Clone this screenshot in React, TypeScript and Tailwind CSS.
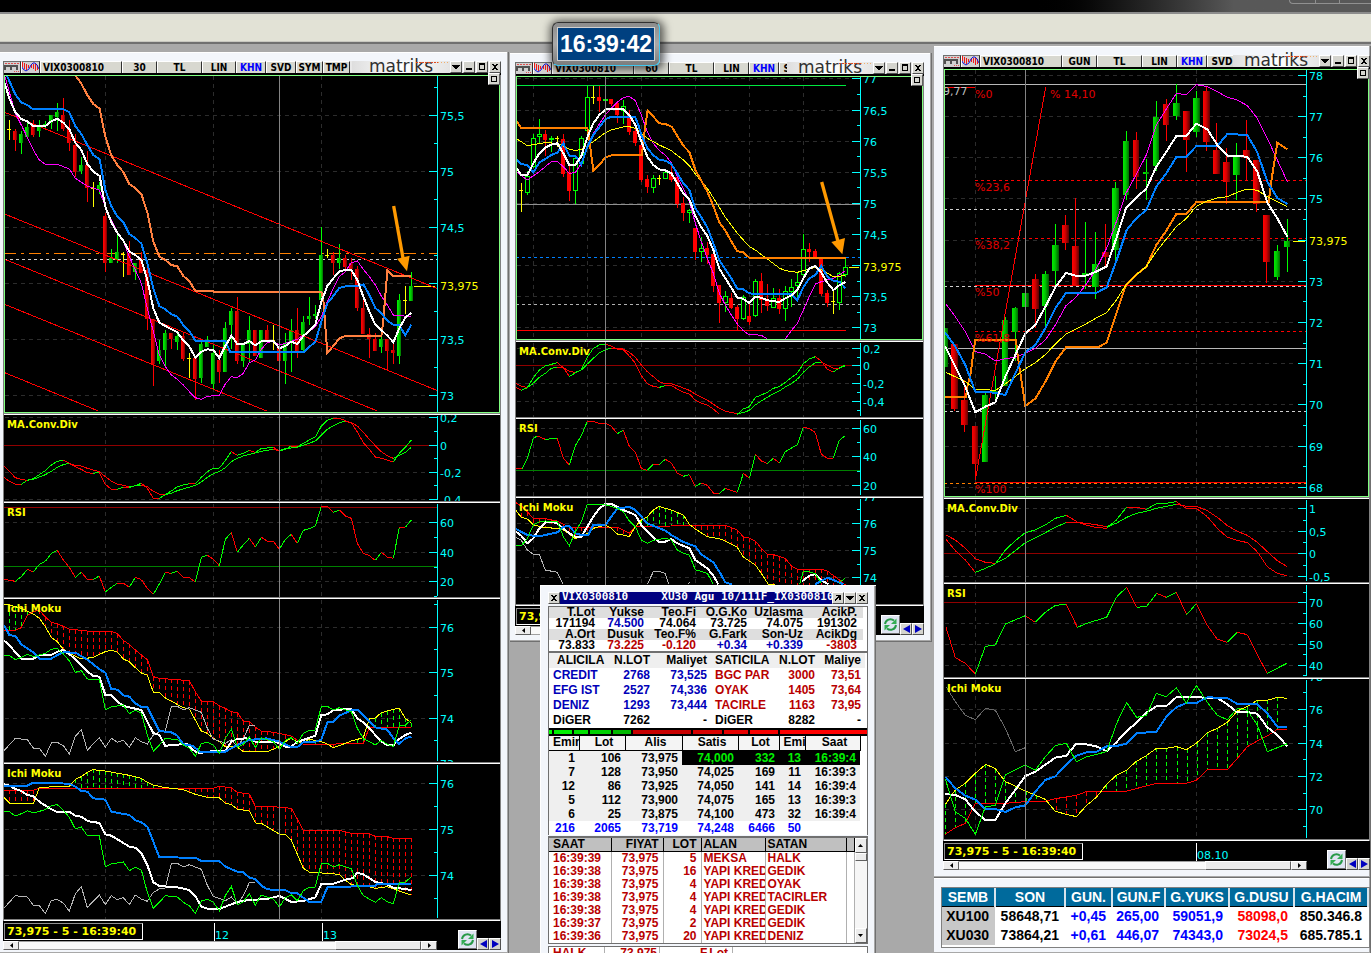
import { useState } from 'react'
import type { ReactNode } from 'react'

// Plot data is stored at three units per screen pixel
const UNIT = 3

type Point = [number, number]
type Series = { color: string; width?: number; points: string }
type Level = { y: number; color: string; dash?: string; from?: number; to?: number }
type Note = { x: number; y: number; text: string; color: string }

type Axis = {
  x: number
  major: [number, string][]
  minor: number[]
  columns: number[]
  cursor: number
}

const WHITE = '#ffffff'
const BLUE = '#0080ff'
const MAGENTA = '#ff00ff'
const YELLOW = '#ffff00'
const ORANGE = '#ff8000'
const SALMON = '#ff8040'
const RED = '#ff0000'
const LIME = '#00ff00'
const CYAN = '#00ffff'
const SILVER = '#b4b4b4'

const parse = (s: string): Point[] =>
  s.trim().split(/\s+/).map((p) => p.split(',').map(Number) as Point)

const rescale = (s: string, offset: number, factor: number) =>
  parse(s).map(([x, y]) => `${x},${Math.round(offset + y * factor)}`).join(' ')

function valueAt(points: Point[], x: number): number | null {
  for (let i = 1; i < points.length; i++) {
    const [x0, y0] = points[i - 1]
    const [x1, y1] = points[i]
    if (x >= x0 && x <= x1) return y0 + ((y1 - y0) * (x - x0)) / (x1 - x0 || 1)
  }
  return null
}

function Line({ color, width = 1, points }: Series) {
  return (
    <>
      {points.split('|').map((part, i) => (
        <polyline
          key={i}
          points={part.trim()}
          fill="none"
          stroke={color}
          strokeWidth={width}
          vectorEffect="non-scaling-stroke"
        />
      ))}
    </>
  )
}

// Rising stretches are green, falling ones are red
function SlopeLine({ points }: { points: string }) {
  return (
    <>
      {points.split('|').map((part, k) => {
        const pts = parse(part)
        return pts.slice(1).map(([x, y], i) => (
          <line
            key={`${k}-${i}`}
            x1={pts[i][0]}
            y1={pts[i][1]}
            x2={x}
            y2={y}
            stroke={y < pts[i][1] ? LIME : RED}
            vectorEffect="non-scaling-stroke"
          />
        ))
      })}
    </>
  )
}

function Cloud({ a, b, start, step }: { a: string; b: string; start: number; step: number }) {
  const pa = parse(a)
  const pb = parse(b)
  const bars = Array.from({ length: 70 }, (_, i) => Math.round(start + step * i))
  return (
    <>
      {bars.map((x) => {
        const ya = valueAt(pa, x)
        const yb = valueAt(pb, x)
        if (ya === null || yb === null || Math.abs(ya - yb) < 9) return null
        return (
          <line
            key={x}
            x1={x}
            x2={x}
            y1={Math.min(ya, yb)}
            y2={Math.max(ya, yb)}
            stroke={ya < yb ? LIME : RED}
            strokeDasharray="4 3"
            vectorEffect="non-scaling-stroke"
          />
        )
      })}
      <Line color={RED} points={b} />
      <Line color={YELLOW} points={a} />
    </>
  )
}

type CandleProps = { data: string; start: number; step: number; body: number; hollow?: boolean; id: string }

// Each entry: kind, high, top of body, bottom of body, low
function Candles({ data, start, step, body, hollow, id }: CandleProps) {
  return (
    <>
      <defs>
        <linearGradient id={`${id}-up`}>
          <stop offset="0" stopColor="#00ee00" />
          <stop offset="0.45" stopColor="#00c800" />
          <stop offset="1" stopColor="#006000" />
        </linearGradient>
        <linearGradient id={`${id}-down`}>
          <stop offset="0" stopColor="#ff0000" />
          <stop offset="0.45" stopColor="#d80000" />
          <stop offset="1" stopColor="#600000" />
        </linearGradient>
      </defs>
      {data.trim().split(/\s*;\s*/).map((row, i) => {
        const [kind, ...nums] = row.split(' ')
        const [high, top, bottom, low] = nums.map(Number)
        const x = Math.round(start + step * i)
        const color = kind === 'g' ? LIME : kind === 'r' ? RED : YELLOW
        const h = Math.max(bottom - top, 3)
        let fill = kind === 'y' ? YELLOW : `url(#${id}-${kind === 'g' ? 'up' : 'down'})`
        if (hollow) fill = kind === 'g' ? '#000000' : color
        return (
          <g key={i}>
            <line x1={x} x2={x} y1={high} y2={low} stroke={color} vectorEffect="non-scaling-stroke" />
            <rect
              x={x - body / 2}
              y={top}
              width={body}
              height={h}
              fill={fill}
              stroke={hollow && kind === 'g' ? LIME : 'none'}
              vectorEffect="non-scaling-stroke"
            />
          </g>
        )
      })}
    </>
  )
}

type PaneProps = {
  ox: number
  oy: number
  axis: Axis
  heightClass: string
  height: number
  title?: string
  levels?: Level[]
  notes?: Note[]
  framed?: boolean
  children: ReactNode
}

function Pane({ ox, oy, axis, heightClass, height, title, levels = [], notes = [], framed, children }: PaneProps) {
  const bottom = oy + height * UNIT
  return (
    <section className="relative border-x border-x-[#808080] bg-black">
      <svg className={`block w-full ${heightClass} font-['DejaVu_Sans',Verdana,sans-serif] text-[11px]`}>
        <g transform={`scale(${1 / UNIT}) translate(${-ox} ${-oy})`} shapeRendering="crispEdges">
          {axis.major.map(([y]) => (
            <line key={y} x1={ox + 4} x2={axis.x - 30} y1={y} y2={y} stroke="#2c2c2c" strokeDasharray="4 4" vectorEffect="non-scaling-stroke" />
          ))}
          {axis.columns.map((x) => (
            <line key={x} x1={x} x2={x} y1={oy + 4} y2={bottom} stroke="#2c2c2c" strokeDasharray="4 4" vectorEffect="non-scaling-stroke" />
          ))}
          {levels.map((l, i) => (
            <line
              key={i}
              x1={l.from ?? ox}
              x2={l.to ?? axis.x}
              y1={l.y}
              y2={l.y}
              stroke={l.color}
              strokeDasharray={l.dash}
              vectorEffect="non-scaling-stroke"
            />
          ))}
          {children}
          <line x1={axis.cursor} x2={axis.cursor} y1={oy} y2={bottom} stroke="#848484" vectorEffect="non-scaling-stroke" />
          <line x1={axis.x} x2={axis.x} y1={oy + 3} y2={bottom - 3} stroke={CYAN} vectorEffect="non-scaling-stroke" />
          {axis.major.map(([y]) => (
            <line key={y} x1={axis.x - 26} x2={axis.x} y1={y} y2={y} stroke={CYAN} vectorEffect="non-scaling-stroke" />
          ))}
          {axis.minor.map((y) => (
            <line key={y} x1={axis.x - 10} x2={axis.x} y1={y} y2={y} stroke={CYAN} vectorEffect="non-scaling-stroke" />
          ))}
        </g>
        {axis.major.filter(([, text]) => text).map(([y, text]) => (
          <text key={y} x={Math.floor((axis.x - ox + 8) / UNIT)} y={Math.round((y - oy + 13) / UNIT)} fill={CYAN}>
            {text}
          </text>
        ))}
        {notes.map((n) => (
          <text key={n.text} x={Math.floor((n.x - ox) / UNIT)} y={Math.round((n.y - oy) / UNIT)} fill={n.color}>
            {n.text}
          </text>
        ))}
        {title && (
          <text x="3" y="13" fill={YELLOW} className="text-[10px] font-bold">
            {title}
          </text>
        )}
        {framed && (
          <rect x="0" y="0" width="100%" height={height} fill="none" stroke="#80ff80" strokeWidth="2" shapeRendering="crispEdges" />
        )}
      </svg>
      {framed && (
        <button
          aria-label="Restore pane"
          className="absolute right-0 -top-0.5 flex size-3 items-center justify-center border border-t-white border-l-white border-r-[#606060] border-b-[#606060] bg-[#d6d6d0]"
        >
          <span className="size-1.5 border border-black" />
        </button>
      )}
      <div className="h-px bg-[#808080]" />
      <div className="h-px bg-white" />
    </section>
  )
}

function Arrow({ from, to, head }: { from: Point; to: Point; head: string }) {
  return (
    <g shapeRendering="auto">
      <line x1={from[0]} y1={from[1]} x2={to[0]} y2={to[1]} stroke="#ff9900" strokeWidth={10} />
      <polygon points={head} fill="#ff9900" />
    </g>
  )
}

/* ---------- window chrome ---------- */

function SmallButton({ label, children }: { label: string; children: ReactNode }) {
  return (
    <button
      aria-label={label}
      className="flex h-3 w-3 shrink-0 items-center justify-center border border-t-white border-l-white border-r-[#505050] border-b-[#505050] bg-[#d4d4ce]"
    >
      <svg width="8" height="8" viewBox="0 0 8 8" shapeRendering="crispEdges">{children}</svg>
    </button>
  )
}

const Cross = () => <path d="M1 1h2v1h2v-1h2v1h-1v1h-1v2h1v1h1v1h-2v-1h-2v1h-2v-1h1v-1h1v-2h-1v-1h-1z" fill="#000" />
const Down = () => <path d="M0 2h8v1h-1v1h-1v1h-1v1h-2v-1h-1v-1h-1v-1h-1z" fill="#000" />

function WindowButtons() {
  return (
    <div className="flex shrink-0 gap-px">
      <SmallButton label="Menu"><Down /></SmallButton>
      <SmallButton label="Minimize"><path d="M1 5h6v2h-6z" fill="#000" /></SmallButton>
      <SmallButton label="Maximize"><path d="M1 0h6v7h-6z M2 2v4h4v-4z" fill="#000" fillRule="evenodd" /></SmallButton>
      <SmallButton label="Close"><Cross /></SmallButton>
    </div>
  )
}

function Logo({ widthClass }: { widthClass: string }) {
  return (
    <div className={`relative flex h-3 shrink-0 justify-center bg-gradient-to-r from-[#dedede] via-white to-[#e4e4e4] ${widthClass}`}>
      <span className="font-['DejaVu_Sans',Verdana,sans-serif] text-[17px] leading-[10px] font-normal text-[#303030]">matriks</span>
      <svg className="absolute right-0 top-0" width="34" height="2" shapeRendering="crispEdges">
        <line x1="0" x2="22" y1="1" y2="1" stroke="#e04820" strokeDasharray="2 1" />
        <line x1="22" x2="34" y1="1" y2="1" stroke="#f0b070" strokeDasharray="1 2" />
      </svg>
    </div>
  )
}

const toolClass =
  'h-3 shrink-0 overflow-hidden border-t border-r border-l border-t-white border-l-white border-r-[#303030] bg-[#d8d8d0] text-center text-[10px] leading-[11px] font-bold whitespace-nowrap'

type Tool = [string, string]

function Toolbar({ symbol, tools, logoClass }: { symbol: string; tools: Tool[]; logoClass: string }) {
  return (
    <header className="border-l border-l-[#707070] bg-black pb-0.5">
      <div className="flex h-3 justify-between bg-[#e8e8e8] font-['DejaVu_Sans_Condensed','Noto_Sans',Tahoma,sans-serif]">
        <div className="flex min-w-0 flex-1 overflow-hidden">
          <button aria-label="Page" className="h-3 w-[17px] shrink-0 border-t border-r border-t-[#707070] border-r-[#303030] bg-[#d0d0d0]">
            <svg width="16" height="11" viewBox="0 0 16 11" shapeRendering="crispEdges">
              <path d="M1 1.5h14" stroke="#e05050" strokeDasharray="2 1" />
              <path d="M1 8V4h12v4M7 4v4" fill="none" stroke="#505050" strokeWidth="2" />
              <path d="M10 9.500h5" stroke="#e05050" strokeDasharray="1 1" />
            </svg>
          </button>
          <button aria-label="Chart type" className="h-3 w-[19px] shrink-0 border-t border-r border-l border-t-[#707070] border-l-white border-r-[#303030] bg-[#d0d0d0]">
            <svg width="17" height="11" viewBox="0 0 17 11" shapeRendering="crispEdges">
              <path d="M0.500 0v5M2.500 1v6M4.500 2v6M6.500 3v3M9.500 3v3M11.500 2v5M13.500 2v7M15.500 3v5" stroke="#f01818" />
              <path d="M0 5l1 2 3 2 3-2 2-4 2-2h2l2 2 2 4" fill="none" stroke="#1818d8" shapeRendering="auto" />
            </svg>
          </button>
          <button className={`w-[82px] pl-0.5 !text-left ${toolClass}`}>{symbol}</button>
          {tools.map(([text, width]) => (
            <button key={text} className={`${toolClass} ${width} ${text === 'KHN' ? 'text-[#0000ff]' : 'text-black'}`}>
              {text}
            </button>
          ))}
        </div>
        <Logo widthClass={logoClass} />
        <WindowButtons />
      </div>
    </header>
  )
}

type FooterProps = { axisClass: string; ticks: [number, string][]; thumbClass: string }

function ChartFooter({ axisClass, ticks, thumbClass }: FooterProps) {
  return (
    <footer className="flex justify-between bg-black">
      <div className={`min-w-0 ${axisClass}`}>
        <div className="flex h-5">
          <output className="mt-0.5 mb-px ml-px w-[139px] shrink-0 overflow-hidden border border-t-[#909090] border-l-[#909090] border-r-white border-b-white pl-0.5 font-['DejaVu_Sans',Verdana,sans-serif] text-[11px] leading-[15px] font-bold whitespace-nowrap text-[#ffff00]">
            73,975 - 5 - 16:39:40
          </output>
          <svg className="h-5 min-w-0 flex-1 font-['DejaVu_Sans',Verdana,sans-serif] text-[11px]">
            {ticks.map(([x, text]) => (
              <g key={text}>
                <line x1={x} x2={x} y1="2" y2="20" stroke="#fff" shapeRendering="crispEdges" />
                <text x={x + 1} y="18" fill={CYAN}>{text}</text>
              </g>
            ))}
          </svg>
        </div>
        <div className="flex h-[9px] bg-[#fafafa]">
          <button aria-label="Scroll left" className="flex w-4 items-center justify-center border border-white border-r-[#606060] border-b-[#606060] bg-[#ececec]">
            <svg width="3" height="5"><path d="M3 0v5L0 2.500z" /></svg>
          </button>
          <div className="flex-1 border-y border-[#a0a0a0]" />
          <div className={`border border-white border-r-[#606060] border-b-[#606060] bg-[#ececec] ${thumbClass}`} />
          <button aria-label="Scroll right" className="flex w-4 items-center justify-center border border-white border-r-[#606060] border-b-[#606060] bg-[#ececec]">
            <svg width="3" height="5"><path d="M0 0v5l3-2.500z" /></svg>
          </button>
        </div>
      </div>
      <div className="flex items-end">
        <button aria-label="Refresh" className="mb-px flex size-[19px] items-center justify-center border border-t-white border-l-white border-r-[#707070] border-b-[#707070] bg-[#dfe4f2]">
          <svg width="15" height="15" viewBox="0 0 15 15">
            <path d="M2 7a5.500 5.500 0 0 1 9-3.500" fill="none" stroke="#279a48" strokeWidth="2" />
            <path d="M13.500 1.500v5.500h-5.500z" fill="#35ad55" />
            <path d="M13 8a5.500 5.500 0 0 1-9 3.500" fill="none" stroke="#279a48" strokeWidth="2" />
            <path d="M1.500 13.500v-5.500h5.500z" fill="#35ad55" />
          </svg>
        </button>
        <button aria-label="Previous" className="flex size-3 items-center justify-center border border-t-white border-l-white border-r-[#505050] border-b-[#505050] bg-[#d4d4ce]">
          <svg width="7" height="8"><path d="M7 0v8L0 4z" fill="#0000c0" /></svg>
        </button>
        <button aria-label="Next" className="flex size-3 items-center justify-center border border-t-white border-l-white border-r-[#505050] border-b-[#505050] bg-[#d4d4ce]">
          <svg width="7" height="8"><path d="M0 0v8l7-4z" fill="#0000c0" /></svg>
        </button>
      </div>
    </footer>
  )
}

const frameClass = 'bg-[#f3f6fb] shadow-[inset_-1px_-1px_0_#707070,inset_-2px_-2px_0_#a8a8a8,inset_0_1px_0_#ffffff]'

/* ---------- 30 minute chart ---------- */

const leftCandles = `y 210 238 240 270;r 237 243 271 302;g 243 252 279 311;g 215 230 261 261;r 210 227 255 262;g 210 225 243 262;g 212 222 228 235;g 195 195 218 236;g 159 186 200 243;r 144 195 238 243;r 211 237 280 302;r 252 285 365 380;g 321 345 363 372;r 303 345 415 456;y 396 414 416 471;g 396 405 420 432;r 490 498 640 666;g 598 624 640 640;g 545 606 626 640;y 606 611 613 682;r 573 608 674 674;g 640 640 666 690;r 606 624 668 668;r 640 660 808 840;r 808 808 942 1008;g 870 900 934 942;g 840 850 900 951;r 848 850 868 898;g 850 858 877 900;r 850 858 926 932;y 909 924 926 984;r 924 924 988 1050;g 876 883 985 1000;g 857 877 890 890;g 885 908 1001 1018;r 900 930 967 1000;g 816 834 965 965;g 775 784 825 896;r 741 784 934 942;g 880 880 934 952;g 798 841 882 940;r 841 841 918 918;g 841 841 923 923;r 825 841 874 878;y 825 870 872 900;r 870 890 934 934;g 850 878 934 1001;g 808 841 880 966;r 773 841 902 924;g 798 816 901 910;g 741 798 806 826;g 765 793 797 806;g 531 615 750 750;y 597 616 618 624;r 606 615 640 676;g 582 624 640 658;r 615 624 650 658;r 624 640 658 690;r 648 658 775 783;r 740 775 851 851;r 834 851 868 924;r 850 868 902 902;g 860 868 892 909;r 868 868 902 962;r 882 900 910 942;g 732 750 918 942;y 708 750 752 792;g 666 708 753 753`

const leftPrice: Series[] = [
  { color: RED, points: '14,187 1310,715|14,492 1310,1021|14,628 1132,1083|14,763 800,1083|14,968 293,1082' },
  { color: MAGENTA, points: '15,80 46,190 64,225 82,262 100,300 118,330 136,343 172,343 208,357 226,385 262,408 298,420 316,470 334,510 352,545 370,575 388,620 406,660 424,700 442,775 460,845 478,915 496,950 514,975 532,988 550,1005 568,1025 586,1043 604,1048 622,1039 658,1036 676,1002 694,980 712,983 730,970 748,938 766,930 784,898 802,877 820,875 838,885 856,880 892,868 910,855 928,845 946,830 964,800 982,755 1000,715 1018,680 1036,665 1054,638 1072,633 1090,658 1108,680 1126,705 1144,738 1162,765 1180,795 1234,800' },
  { color: SALMON, width: 2, points: '225,75 243,99 262,135 280,162 299,176 316,260 334,316 352,345 370,366 388,402 406,414 424,432 442,487 460,575 478,620 496,630 514,645 532,649 550,678 568,694 586,722 638,722 640,725 964,725 970,750 982,908 1000,888 1018,865 1036,858 1144,858 1150,810 1162,662 1180,678 1234,678' },
  { color: BLUE, width: 2, points: '20,75 46,133 64,157 82,165 98,177 190,177 208,187 226,228 244,252 262,285 280,315 299,328 316,420 334,468 352,500 370,516 388,552 406,564 424,581 442,640 460,715 478,768 496,778 514,793 532,800 550,825 568,843 586,872 676,872 690,905 912,905 946,875 964,815 982,760 1000,738 1018,714 1042,708 1072,708 1090,703 1108,735 1126,774 1144,790 1162,812 1180,824 1198,826 1216,856 1234,824' },
  { color: WHITE, width: 2, points: '14,100 28,145 46,187 64,207 82,214 98,227 136,228 154,214 172,206 190,218 208,238 226,278 244,300 262,342 280,365 299,378 316,470 334,517 352,548 370,572 388,605 406,615 424,630 442,690 460,775 478,818 496,828 532,847 550,872 568,890 586,922 604,905 622,898 640,900 658,924 676,888 694,857 712,882 730,882 748,873 766,886 784,874 820,872 838,895 856,888 874,875 892,882 910,858 928,842 946,824 964,755 982,708 1000,685 1018,664 1036,660 1054,660 1072,690 1090,740 1108,785 1126,824 1144,840 1162,857 1180,876 1198,835 1216,803 1234,788' },
]

const leftMacd = '12,202 28,214 46,223 64,223 82,211 100,206 118,194 136,182 154,165 172,154 190,151 208,160 226,170 244,178 262,188 280,190 298,187 316,223 334,238 352,238 370,232 388,232 406,227 424,220 442,235 460,265 478,266 496,253 514,243 532,230 550,225 568,221 586,222 604,202 622,185 640,175 658,174 676,152 694,125 712,136 730,130 748,121 766,128 784,115 802,114 820,112 838,123 856,118 874,108 892,111 910,100 928,90 946,81 964,48 982,31 1000,25 1018,25 1036,32 1054,38 1072,66 1090,98 1108,118 1126,141 1144,145 1162,150 1180,156 1198,130 1216,112 1234,90'
const leftSignal = '12,168 46,203 64,208 82,211 100,208 136,194 154,184 172,172 190,164 208,160 226,166 244,168 262,175 298,185 316,200 334,213 352,222 388,230 424,225 442,230 460,244 478,253 496,254 514,250 532,242 586,226 604,216 622,202 640,191 658,185 676,173 694,155 712,145 730,138 784,124 820,118 838,122 856,116 892,112 946,93 964,75 982,58 1000,47 1018,38 1036,34 1054,38 1072,48 1090,67 1108,88 1126,107 1144,125 1162,137 1180,145 1198,136 1216,127 1234,112'
const leftRsi = '12,508 46,514 64,500 82,478 100,486 118,463 136,454 154,430 172,421 190,450 208,472 226,502 244,487 262,508 280,508 298,498 316,546 334,532 352,520 370,520 388,532 406,502 424,509 442,535 460,553 478,522 496,487 514,490 532,484 550,502 568,503 586,516 604,442 622,436 640,448 658,467 676,388 694,367 712,427 730,404 748,385 766,411 784,382 802,394 820,394 838,418 856,388 874,373 892,400 910,361 928,356 946,348 964,289 982,289 1000,307 1018,300 1036,318 1054,325 1072,400 1090,430 1108,437 1126,451 1144,427 1162,441 1180,445 1198,352 1216,352 1234,330'

const leftClose = '12,181 28,181 46,194 64,187 82,178 100,185 136,175 154,163 172,160 190,177 208,198 226,232 244,227 262,252 298,253 316,345 334,336 370,330 388,356 406,345 424,354 442,420 460,468 478,450 496,430 532,434 550,450 568,460 586,484 604,446 622,441 640,450 658,475 676,430 694,403 712,457 730,448 748,425 766,458 784,428 820,440 838,464 856,436 874,428 892,445 910,415 928,406 946,405 964,334 982,334 1000,345 1018,338 1054,350 1072,400 1090,430 1108,440 1126,450 1144,436 1162,448 1180,454 1198,392 1216,390 1234,374'
const leftLagging = '12,467 46,430 82,434 100,459 118,460 136,484 154,444 172,442 190,452 208,477 226,424 244,404 262,466 280,446 298,428 316,457 334,430 352,442 370,436 388,457 406,428 424,440 442,447 460,420 478,410 496,408 514,336 532,334 550,345 568,338 586,345 604,352 622,400 640,432 676,445 694,434 712,455 730,430 748,392 766,391'

const leftShort = {
  a: '12,28 28,30 64,40 100,57 118,70 136,95 154,127 172,140 190,163 208,175 244,192 280,187 316,170 334,166 352,171 370,192 388,200 406,218 424,234 442,240 460,292 478,293 496,309 550,338 568,342 586,375 604,408 622,415 640,430 658,440 676,455 712,456 730,470 800,471 838,455 856,440 874,430 892,440 910,443 928,433 964,440 982,447 1000,458 1018,452 1054,438 1090,428 1108,371 1126,369 1144,353 1180,343 1198,340 1216,370 1234,384',
  b: '12,106 46,106 64,98 82,62 100,50 118,46 136,66 154,82 172,86 208,102 262,108 334,109 352,116 370,136 388,148 406,165 424,180 442,194 460,245 478,250 532,254 568,257 586,290 604,318 640,320 658,332 676,340 694,350 712,353 730,378 748,380 766,397 784,408 802,409 838,415 874,423 910,448 964,448 1054,446 1090,445 1108,397 1234,397',
  fast: '12,137 28,150 46,172 64,191 100,191 118,181 154,180 172,170 190,165 208,178 226,192 244,210 262,230 280,243 298,245 316,300 334,301 352,320 370,333 424,345 442,380 460,414 478,420 496,453 514,450 560,447 586,470 600,474 640,468 676,468 694,440 712,432 740,430 766,440 800,440 838,443 856,455 874,455 892,440 910,435 946,422 964,360 982,358 1000,345 1054,342 1072,370 1090,382 1108,400 1126,420 1144,440 1162,450 1180,451 1198,432 1216,420 1234,413',
  slow: '12,90 28,120 46,123 64,148 100,172 118,191 154,191 172,180 190,172 226,173 262,194 298,222 316,233 334,282 352,284 370,301 388,305 406,325 424,336 442,337 478,408 514,412 532,422 550,448 577,452 600,470 676,470 712,450 748,435 800,430 838,440 874,456 892,456 910,442 946,440 964,434 982,382 1000,380 1018,362 1054,346 1072,344 1090,360 1108,380 1126,397 1162,404 1180,430 1198,447 1216,430 1234,425',
}

const leftLong = {
  a: '12,607 28,624 46,626 100,626 118,577 208,574 226,553 244,545 262,532 280,523 298,527 316,528 388,541 424,550 442,562 460,570 490,577 550,584 586,598 622,607 658,609 676,624 694,629 712,642 748,648 766,684 784,685 838,717 856,718 874,735 892,778 910,820 928,831 1018,838 1036,855 1054,869 1108,875 1126,880 1162,875 1198,888 1216,894 1234,900',
  b: '12,586 100,586 118,580 640,580 658,574 694,578 712,592 748,597 766,634 820,635 874,640 892,672 910,706 1018,706 1054,715 1108,716 1126,724 1162,725 1180,730 1234,730',
  fast: '12,568 28,572 46,582 64,588 82,600 100,604 118,620 154,643 172,651 208,650 226,662 244,665 262,677 280,682 298,683 316,718 334,722 388,755 406,758 424,775 442,810 460,862 478,873 532,877 568,885 586,903 604,935 622,941 658,942 712,921 748,915 802,912 838,903 874,921 910,918 946,907 964,867 1000,866 1036,854 1060,849 1072,833 1090,838 1126,861 1162,868 1180,878 1216,882 1234,886',
  slow: '12,574 82,572 100,563 208,566 226,575 244,588 262,590 280,610 316,614 334,650 388,660 406,676 424,682 442,695 460,740 478,787 586,788 604,798 658,798 676,815 712,830 730,832 748,848 766,852 784,872 802,883 856,886 874,894 892,895 928,921 964,920 982,877 1126,872 1130,867 1234,867',
}

function LeftChart() {
  const base = { x: 1312, columns: [317, 641, 965], cursor: 838 }
  return (
    <article className={`w-[509px] shrink-0 pt-[9px] pr-2 pb-1 pl-[3px] ${frameClass}`}>
      <Toolbar
        symbol="VIX0300810"
        logoClass="w-[98px]"
        tools={[['30', 'w-[35px]'], ['TL', 'w-[45px]'], ['LIN', 'w-[34px]'], ['KHN', 'w-[30px]'], ['SVD', 'w-[30px]'], ['SYM', 'w-[27px]'], ['TMP', 'w-[27px]']]}
      />
      <Pane
        framed
        ox={12}
        oy={75}
        heightClass="h-[338px]"
        height={338}
        axis={{ ...base, major: [[197, '75,5'], [365, '75'], [533, '74,5'], [701, ''], [869, '73,5'], [1037, '73']], minor: [113, 281, 449, 617, 785, 953] }}
        levels={[
          { y: 610, color: ORANGE, dash: '12 5 3 5' },
          { y: 628, color: '#d0d0d0', dash: '3 3' },
          { y: 709, color: YELLOW, from: 1243, to: 1306 },
        ]}
        notes={[{ x: 1321, y: 720, text: '73,975', color: YELLOW }]}
      >
        <Candles id="m30" data={leftCandles} start={28} step={18} body={12} />
        {leftPrice.map((s, i) => <Line key={i} {...s} />)}
        <Arrow from={[1181, 468]} to={[1209, 624]} head="1191,626 1229,617 1221,664" />
      </Pane>
      <Pane
        ox={12}
        oy={15}
        heightClass="h-[86px]"
        height={86}
        title="MA.Conv.Div"
        axis={{ ...base, major: [[22, '0,2'], [106, '0'], [188, '-0,2'], [268, '-0,4']], minor: [64, 146, 227] }}
        levels={[{ y: 106, color: '#900000' }]}
      >
        <SlopeLine points={leftMacd} />
        <SlopeLine points={leftSignal} />
      </Pane>
      <Pane
        ox={12}
        oy={279}
        heightClass="h-[94px]"
        height={94}
        title="RSI"
        axis={{ ...base, major: [[338, '60'], [428, '40'], [515, '20']], minor: [382, 471, 558] }}
        levels={[{ y: 292, color: '#900000' }, { y: 469, color: '#008000' }]}
      >
        <SlopeLine points={leftRsi} />
      </Pane>
      <Pane
        ox={12}
        oy={12}
        heightClass="h-[163px]"
        height={163}
        title="Ichi Moku"
        axis={{ ...base, major: [[98, '76'], [233, '75'], [371, '74'], [507, '73']], minor: [29, 164, 301, 437] }}
      >
        <Cloud a={leftShort.a} b={leftShort.b} start={28} step={18} />
        <Line color={SILVER} points={leftLagging} />
        <Line color={WHITE} width={2} points={leftShort.fast} />
        <Line color={BLUE} width={2} points={leftShort.slow} />
        <Line color={LIME} points={leftClose} />
      </Pane>
      <Pane
        ox={12}
        oy={507}
        heightClass="h-[155px]"
        height={155}
        title="Ichi Moku"
        axis={{ ...base, major: [[566, '76'], [704, '75'], [842, '74']], minor: [635, 773, 911] }}
      >
        <Cloud a={leftLong.a} b={leftLong.b} start={28} step={18} />
        <Line color={SILVER} points={rescale(leftLagging, 467, 1.011)} />
        <Line color={WHITE} width={2} points={leftLong.fast} />
        <Line color={BLUE} width={2} points={leftLong.slow} />
        <Line color={LIME} points={rescale(leftClose, 467, 1.011)} />
      </Pane>
      <ChartFooter axisClass="w-[434px]" ticks={[[71, '12'], [179, '13']]} thumbClass="w-[86px]" />
    </article>
  )
}

/* ---------- 60 minute chart ---------- */

const midCandles = `r 528 528 573 573;y 550 571 573 636;g 513 529 578 584;g 402 415 500 505;g 357 402 409 430;r 390 402 420 467;g 408 414 419 456;y 408 414 418 440;r 402 418 522 530;r 497 517 573 603;g 470 475 571 612;g 408 415 490 497;g 257 291 392 400;y 257 290 293 312;r 257 291 302 336;g 285 298 302 317;r 298 298 312 318;r 305 310 345 370;g 299 320 331 372;r 330 345 396 405;r 370 393 430 437;r 430 435 540 545;r 525 538 561 579;g 525 535 562 579;y 525 533 536 554;g 510 517 536 536;r 495 517 539 545;r 530 530 611 623;r 590 610 638 662;g 628 632 637 668;r 684 684 756 780;g 711 745 753 786;r 727 745 764 792;r 745 762 857 876;r 856 856 909 968;g 872 889 908 936;r 880 893 923 928;r 915 920 957 990;g 885 893 956 960;r 910 947 965 976;g 838 844 947 950;r 818 843 900 940;r 852 900 917 934;g 864 894 922 922;r 868 893 927 942;g 857 875 926 962;g 838 862 875 922;g 820 846 857 900;g 702 747 823 830;r 729 748 756 785;r 748 754 776 776;r 770 772 882 888;r 870 880 909 922;y 870 904 907 942;g 815 821 908 930;g 772 801 824 830`

const midPrice: Series[] = [
  { color: MAGENTA, points: '33,515 67,540 103,515 139,485 157,485 175,500 193,520 211,518 229,490 247,440 265,400 301,345 319,325 337,306 355,293 373,289 391,302 409,345 427,395 445,430 463,452 481,465 499,488 517,530 535,565 553,605 571,670 589,725 607,775 625,820 643,880 661,915 679,945 697,972 715,992 733,1005 751,1004 769,1006 787,1016|841,1016 859,992 877,970 895,930 913,890 931,852 949,845 985,835 1003,825 1021,812' },
  { color: YELLOW, points: '33,415 67,437 85,434 121,428 157,430 193,448 211,451 229,449 265,425 301,398 319,390 355,381 373,380 391,385 427,415 463,435 499,452 535,480 553,497 571,522 607,565 643,622 661,652 697,700 733,740 751,750 787,777 823,804 841,812 877,817 895,812 931,802 949,808 985,830 1021,827' },
  { color: ORANGE, width: 2, points: '33,362 49,384 247,384 253,420 265,511 283,495 301,472 322,465 411,465 415,420 428,331 445,350 463,370 481,372 500,380 517,408 535,437 553,456 571,510 607,575 625,618 643,667 661,692 679,724 697,754 713,756 733,773 1022,774' },
  { color: BLUE, width: 2, points: '33,478 49,492 67,495 85,517 103,488 139,465 157,458 175,430 193,467 211,468 229,494 247,440 265,404 283,382 301,358 319,350 390,350 400,375 409,405 427,444 445,466 463,479 481,482 499,492 517,520 535,550 553,570 571,625 589,652 607,682 625,730 643,780 661,808 679,835 697,866 715,868 733,880 751,882 859,882 877,900 895,862 913,835 931,825 949,798 967,830 985,842 1003,845 1021,864' },
  { color: WHITE, width: 2, points: '33,502 49,525 67,525 85,490 103,460 121,443 139,434 157,430 175,460 193,495 211,495 229,468 247,412 265,370 283,345 301,329 319,326 355,328 373,345 391,375 409,425 427,470 445,495 463,508 481,511 499,520 517,550 535,580 553,598 571,648 589,682 607,708 625,750 643,806 661,835 679,863 697,893 713,896 733,909 751,890 769,893 787,901 823,906 841,895 859,886 877,870 895,835 913,805 931,798 949,818 967,848 985,870 1003,856 1021,846' },
]

const midMacd = '33,157 49,166 67,158 85,128 103,105 121,93 139,88 157,83 175,98 193,124 211,114 229,105 247,66 265,40 283,30 301,27 319,33 337,42 355,45 373,62 391,85 409,122 427,146 445,154 463,157 481,152 499,152 517,162 535,172 553,176 571,196 589,205 607,210 625,222 643,238|697,238 715,222 733,215 751,187 769,180 787,172 805,160 823,155 841,142 859,128 877,115 895,86 913,72 931,65 949,78 967,103 985,111 1003,98 1021,90'
const midSignal = '33,146 49,153 67,158 85,145 103,127 121,115 139,100 157,97 175,98 193,109 211,112 229,105 247,88 265,70 283,53 301,44 319,40 355,42 373,52 391,67 409,90 427,110 445,125 463,140 481,146 499,146 517,152 553,166 571,178 607,196 643,220 661,229 697,236 715,233 733,226 751,210 769,198 787,187 805,176 823,168 841,156 859,146 877,133 895,112 913,96 931,83 949,82 967,90 985,100 1003,100 1021,92'
const midRsi = '33,401 51,401 67,370 85,310 97,303 121,313 157,310 175,370 193,390 211,332 229,302 247,259 265,259 283,265 301,265 319,274 337,296 355,286 373,334 391,352 409,400 427,406 445,388 463,388 481,373 499,384 517,415 535,424 553,419 571,454 589,444 607,451 625,474 643,476 661,460 697,472 715,415 733,430 751,358 769,378 787,386 805,370 823,384 841,350 877,329 895,277 913,280 931,293 949,358 967,370 985,370 1003,316 1021,302'
const midSpanA = '33,527 49,547 67,552 85,570 121,578 157,580 175,585 193,597 211,611 229,605 247,595 265,580 301,570 319,580 337,597 355,600 373,605 391,575 409,555 427,545 445,525 463,514 481,520 499,525 535,540 553,568 571,582 607,605 643,611 661,618 697,637 715,666 751,690 769,715 790,748 1003,770'
const midSpanB = '33,503 51,515 67,530 85,551 121,551 157,558 193,577 337,577 355,585 373,595 391,574 499,573 661,571 679,578 697,585 715,606 733,609 751,618 769,640 787,658 805,659 841,670 859,693 877,703 949,703 967,708 1003,735 1021,750'

function MiddleChart() {
  const base = { x: 1067, columns: [85, 247, 409, 571, 733, 895], cursor: 301 }
  return (
    <article className={`mt-px w-[422px] shrink-0 pt-[9px] pr-2 pb-[7px] pl-[5px] ${frameClass}`}>
      <Toolbar
        symbol="VIX0300810"
        logoClass="w-[86px]"
        tools={[['60', 'w-[35px]'], ['TL', 'w-[45px]'], ['LIN', 'w-[35px]'], ['KHN', 'w-[30px]'], ['SVD', 'w-[30px]']]}
      />
      <Pane
        framed
        ox={33}
        oy={228}
        heightClass="h-[264px]"
        height={264}
        axis={{
          ...base,
          major: [[236, '77'], [331, '76,5'], [424, '76'], [517, '75,5'], [611, '75'], [704, '74,5'], [797, ''], [890, '73,5'], [983, '73']],
          minor: [283, 376, 469, 562, 655, 748, 843, 937],
        }}
        levels={[
          { y: 256, color: '#00e840', to: 1022 },
          { y: 613, color: '#909090' },
          { y: 772, color: BLUE, dash: '3 3' },
          { y: 913, color: '#b0b0b0', dash: '3 3' },
          { y: 991, color: RED, to: 1022 },
          { y: 802, color: YELLOW, from: 1031, to: 1062 },
        ]}
        notes={[{ x: 1075, y: 814, text: '73,975', color: YELLOW }]}
      >
        <Candles id="m60" hollow data={midCandles} start={31} step={18} body={12} />
        {midPrice.map((s, i) => <Line key={i} {...s} />)}
        <Arrow from={[950, 546]} to={[1000, 728]} head="979,726 1020,714 1012,763" />
      </Pane>
      <Pane
        ox={33}
        oy={21}
        heightClass="h-[75px]"
        height={75}
        title="MA.Conv.Div"
        axis={{ ...base, major: [[41, '0,2'], [92, '0'], [145, '-0,2'], [199, '-0,4']], minor: [66, 118, 172, 226] }}
        levels={[{ y: 92, color: '#900000' }]}
      >
        <SlopeLine points={midMacd} />
        <SlopeLine points={midSignal} />
      </Pane>
      <Pane
        ox={33}
        oy={252}
        heightClass="h-[77px]"
        height={77}
        title="RSI"
        axis={{ ...base, major: [[281, '60'], [365, '40'], [452, '20']], minor: [322, 409] }}
        levels={[{ y: 406, color: '#008000' }]}
      >
        <SlopeLine points={midRsi} />
      </Pane>
      <Pane
        ox={33}
        oy={489}
        heightClass="h-[106px]"
        height={106}
        title="Ichi Moku"
        axis={{ ...base, major: [[484, '77'], [566, '76'], [647, '75'], [728, '74']], minor: [523, 606, 688, 768] }}
      >
        <Cloud a={midSpanA} b={midSpanB} start={31} step={18} />
        <Line color={SILVER} points="33,607 49,616 67,645 85,658 103,659 121,705 157,712 175,748|427,748 445,710 463,709 481,716 491,748|548,748 553,742" />
        <Line color={WHITE} width={2} points="33,590 49,602 67,625 85,610 103,580 121,562 139,560 157,565 175,580 193,595 211,605 229,605 247,575 265,545 283,520 301,507 319,507 355,525 391,540 409,570 427,590 445,608 463,621 481,620 499,612 517,625 553,640 571,675 607,700 625,722 640,748|890,740 913,722 931,717 949,735 970,748" />
        <Line color={BLUE} width={2} points="33,582 67,600 103,604 157,592 175,575 193,573 211,595 229,600 250,600 265,570 301,570 319,545 337,520 373,516 391,525 409,545 427,565 463,580 481,587 499,600 535,621 571,634 589,658 625,682 643,710 661,742 680,748|930,748 949,738 967,728 985,735 1015,748" />
        <Line color={LIME} points="33,631 49,632 67,610 85,570 103,560 121,558 157,560 175,605 193,632 211,590 229,560 247,508 301,509 337,520 355,530 373,558 391,575 409,615 427,625 445,616 481,610 499,615 517,645 535,655 553,660 571,704 607,715 625,748|884,748 895,708 913,710 931,716 949,745|1003,742 1021,730" />
      </Pane>
      <ChartFooter axisClass="w-[345px]" ticks={[]} thumbClass="w-[86px]" />
    </article>
  )
}

/* ---------- daily chart ---------- */

const rightCandles = `g 980 985 1102 1108;r 1032 1032 1228 1233;r 1140 1200 1276 1296;r 1278 1278 1393 1440;g 1180 1185 1386 1386;g 1128 1174 1180 1210;g 950 961 1157 1157;g 920 925 995 1083;g 878 880 920 920;r 822 837 926 984;g 814 823 917 978;g 671 735 812 855;r 645 675 728 750;r 594 738 855 855;g 666 820 824 868;g 695 792 862 897;r 672 755 771 800;g 546 565 750 790;g 393 423 585 600;r 396 420 530 567;g 477 517 521 600;g 303 351 497 513;r 297 311 374 423;g 252 310 348 360;r 333 333 419 516;g 273 294 396 410;r 261 273 426 453;r 369 450 521 521;r 444 486 545 611;g 429 467 525 600;r 360 450 475 540;r 480 480 613 636;r 645 645 785 848;g 735 753 832 840;g 657 723 741 816`

const rightPrice: Series[] = [
  { color: RED, points: '136,1440 347,262' },
  { color: MAGENTA, points: '48,912 76,950 106,995 136,1055 166,1062 196,1083 226,1076 256,1072 286,1060 316,1045 346,1020 376,975 408,917 437,893 467,855 497,810 530,745 559,665 588,580 618,525 649,465 679,375 709,327 739,280 769,284 799,254 832,260 862,275 892,292 922,300 952,317 982,355 1012,415 1042,480 1072,545' },
  { color: ORANGE, width: 2, points: '45,1190 108,1190 112,1160 122,1120 130,1060 136,1020 258,1020 262,1060 286,1218 316,1196 346,1145 376,1085 408,1042 504,1042 530,1028 559,940 588,855 618,825 649,800 679,735 709,692 739,642 769,642 799,606 1016,606 1026,530 1042,428 1072,448' },
  { color: YELLOW, points: '48,1117 106,1145 136,1167 196,1171 226,1152 286,1106 316,1088 346,1064 376,1032 408,1002 437,988 467,972 497,955 530,938 559,900 588,855 618,825 649,800 679,755 709,717 739,680 769,655 799,619 832,603 862,594 892,590 922,577 952,567 982,571 1012,590 1042,605 1072,620' },
  { color: BLUE, width: 2, points: '45,997 76,1040 106,1095 136,1175 196,1178 226,1185 256,1120 286,1057 316,1035 346,985 376,925 408,879 498,879 530,862 560,780 590,690 619,655 649,630 679,560 709,520 739,471 769,471 799,438 862,438 892,402 952,405 982,457 1012,545 1042,594 1072,612' },
  { color: WHITE, width: 2, points: '45,1038 76,1100 106,1160 136,1237 166,1220 196,1207 226,1130 256,1065 286,1000 316,975 346,920 376,862 408,819 437,827 467,827 497,816 530,799 559,715 588,624 618,593 649,566 679,500 709,455 739,408 769,408 799,371 832,388 862,435 892,467 952,470 982,515 1012,608 1042,655 1072,710' },
]

const rightMacd = '48,148 76,182 106,210 136,247 166,235 196,222 226,180 256,152 286,128 316,120 346,105 376,85 409,76 442,96 467,105 497,112 530,115 559,90 590,51 619,52 649,58 679,41 709,40 739,35 769,55 799,55 832,80 862,115 892,142 922,151 952,158 982,185 1012,230 1042,250 1072,258'
const rightSignal = '48,135 76,150 106,175 136,206 166,217 196,220 226,205 256,182 286,158 346,128 376,112 409,97 442,97 467,100 497,104 530,110 559,100 590,82 619,70 649,64 679,55 709,49 739,43 769,49 799,49 832,62 862,82 892,107 922,124 952,136 982,157 1012,185 1042,212 1072,230'
const rightRsi = '48,412 76,503 106,520 136,552 166,469 196,465 226,402 286,377 316,397 346,367 376,346 409,343 442,412 476,398 530,382 560,320 590,292 620,352 650,349 680,310 709,322 739,307 770,374 799,341 832,406 862,448 892,457 922,427 952,434 982,495 1012,550 1072,519'
const rightSpanA = '46,388 76,345 106,325 136,295 167,268 196,281 226,320 256,333 286,348 346,373 376,409 409,418 439,425 469,392 499,367 530,328 559,301 588,287 618,260 649,242 679,220 709,220 739,215 769,224 799,205 832,173 862,160 892,142 922,108 952,94 982,76 1012,76 1042,67 1072,70'
const rightSpanB = '46,478 76,458 106,445 136,385 226,385 286,380 346,379 376,371 439,361 469,350 588,349 618,341 649,333 679,325 769,325 799,316 832,284 892,284 922,250 952,215 982,198 1012,183 1042,163 1072,163'

function RightChart() {
  const base = { x: 1130, columns: [136, 799], cursor: 286 }
  return (
    <article className={`pt-[9px] pr-px pb-2 pl-[9px] ${frameClass}`}>
      <Toolbar
        symbol="VIX0300810"
        logoClass="w-[86px]"
        tools={[['GUN', 'w-[35px]'], ['TL', 'w-[45px]'], ['LIN', 'w-[35px]'], ['KHN', 'w-[30px]'], ['SVD', 'w-[30px]']]}
      />
      <Pane
        framed
        ox={42}
        oy={207}
        heightClass="h-[428px]"
        height={428}
        axis={{
          ...base,
          major: [[227, '78'], [350, '77'], [472, '76'], [596, '75'], [721, ''], [844, '73'], [967, '72'], [1090, '71'], [1213, '70'], [1339, '69'], [1463, '68']],
          minor: [289, 411, 534, 658, 781, 904, 1030, 1153, 1276, 1399],
        }}
        levels={[
          { y: 254, color: '#b8b8b8' },
          { y: 1045, color: '#b8b8b8' },
          { y: 263, color: RED, to: 136 },
          { y: 541, color: RED, dash: '3 3', from: 136 },
          { y: 715, color: RED, dash: '3 3', from: 136 },
          { y: 994, color: RED, dash: '3 3', from: 136 },
          { y: 856, color: RED, from: 136 },
          { y: 1447, color: RED, from: 136 },
          { y: 628, color: '#d0d0d0', dash: '3 3' },
          { y: 859, color: '#d0d0d0', dash: '3 3' },
          { y: 1234, color: '#d0d0d0', dash: '3 3' },
          { y: 1450, color: ORANGE, dash: '3 3' },
          { y: 724, color: YELLOW, from: 1088, to: 1125 },
        ]}
        notes={[
          { x: 1138, y: 735, text: '73,975', color: YELLOW },
          { x: 40, y: 286, text: '9,77', color: '#c0c0c0' },
          { x: 137, y: 294, text: '%0', color: '#e00000' },
          { x: 362, y: 294, text: '% 14,10', color: '#e00000' },
          { x: 137, y: 573, text: '%23,6', color: '#e00000' },
          { x: 137, y: 747, text: '%38,2', color: '#e00000' },
          { x: 137, y: 888, text: '%50', color: '#e00000' },
          { x: 137, y: 1026, text: '%61,8', color: '#e00000' },
          { x: 137, y: 1479, text: '%100', color: '#e00000' },
        ]}
      >
        <Candles id="day" data={rightCandles} start={44} step={30.2} body={20} />
        {rightPrice.map((s, i) => <Line key={i} {...s} />)}
      </Pane>
      <Pane
        ox={42}
        oy={27}
        heightClass="h-[83px]"
        height={83}
        title="MA.Conv.Div"
        axis={{ ...base, major: [[56, '1'], [125, '0,5'], [190, '0'], [260, '-0,5']], minor: [91, 157, 227] }}
        levels={[{ y: 190, color: '#900000' }]}
      >
        <SlopeLine points={rightMacd} />
        <SlopeLine points={rightSignal} />
      </Pane>
      <Pane
        ox={42}
        oy={282}
        heightClass="h-[93px]"
        height={93}
        title="RSI"
        axis={{ ...base, major: [[338, '70'], [401, '60'], [464, '50'], [527, '40']], minor: [308, 370, 430, 494, 556] }}
        levels={[{ y: 338, color: '#900000' }]}
      >
        <SlopeLine points={rightRsi} />
      </Pane>
      <Pane
        ox={42}
        oy={12}
        heightClass="h-[160px]"
        height={160}
        title="Ichi Moku"
        axis={{ ...base, major: [[4, '78'], [104, '76'], [206, '74'], [304, '72'], [404, '70']], minor: [52, 154, 254, 355, 454] }}
      >
        <Cloud a={rightSpanA} b={rightSpanB} start={46} step={30.2} />
        <Line color="#686868" points="48,35 76,80 106,121 136,134 166,100 196,106 226,160 256,230 286,218" />
        <Line color={WHITE} width={2} points="46,357 76,360 106,373 136,410 166,435 196,435 226,385 256,345 286,303 316,290 376,248 409,242 439,206 469,208 499,214 530,229 559,202 590,168 620,143 649,113 679,94 709,93 739,67 799,67 862,69 892,88 919,110 952,111 982,116 1012,157 1042,180 1072,214" />
        <Line color={BLUE} width={2} points="46,305 76,340 106,362 136,374 166,402 196,402 226,411 256,397 286,391 316,350 346,315 376,304 409,268 439,242 469,232 499,231 530,214 559,213 590,206 620,174 679,171 709,125 739,97 769,84 799,84 832,67 892,69 922,87 982,88 1012,115 1042,155 1072,157" />
        <Line color={LIME} points="46,312 76,410 106,430 136,478 166,396 196,391 226,300 286,270 316,286 346,245 376,212 409,205 439,260 469,246 530,230 560,145 590,82 620,127 649,122 679,55 709,65 739,38 769,84 799,31 832,82 862,121 892,134 922,100 952,106 982,150 1012,230 1072,206" />
      </Pane>
      <ChartFooter axisClass="w-[364px]" ticks={[[113, '08.10']]} thumbClass="w-[86px]" />
    </article>
  )
}

/* ---------- index table ---------- */

const indexColumns: [string, string][] = [
  ['SEMB', 'w-[53px]'], ['SON', 'w-[70px]'], ['GUN.', 'w-[47px]'], ['GUN.F', 'w-[53px]'],
  ['G.YUKS', 'w-16'], ['G.DUSU', 'w-[65px]'], ['G.HACIM', 'w-[74px]'],
]
const indexRows = [
  ['XU100', '58648,71', '+0,45', '265,00', '59051,9', '58098,0', '850.346.8'],
  ['XU030', '73864,21', '+0,61', '446,07', '74343,0', '73024,5', '685.785.1'],
]
const indexColors = ['bg-[#c8c8c8]', '', 'text-[#0000ff]', 'text-[#0000ff]', 'text-[#0000ff]', 'text-[#ff0000]', '']

function IndexTable() {
  return (
    <article className={`flex-1 pt-[9px] pr-px pb-1 pl-[7px] ${frameClass}`}>
      <div className="border border-[#808080] bg-white pb-0.5">
        <table className="w-[426px] table-fixed border-collapse font-['Liberation_Sans',Arial,sans-serif] text-[14px] leading-[18px] font-bold">
          <thead>
            <tr className="bg-[#006a9c] text-white">
              {indexColumns.map(([name, width]) => (
                <th key={name} className={`overflow-hidden border-r-2 border-b border-black border-r-[#d8e4ec] p-0 text-center whitespace-nowrap ${width}`}>{name}</th>
              ))}
            </tr>
          </thead>
          <tbody>
            {indexRows.map((row) => (
              <tr key={row[0]}>
                {row.map((cell, i) => (
                  <td key={i} className={`h-[19px] p-0 pr-1.5 text-right whitespace-nowrap ${indexColors[i]}`}>{cell}</td>
                ))}
              </tr>
            ))}
          </tbody>
        </table>
      </div>
    </article>
  )
}

/* ---------- quote window ---------- */

const summary = [
  { head: ['T.Lot', 'Yukse', 'Teo.Fi', 'O.G.Ko', 'Uzlasma', 'AcikP.'], row: ['171194', '74.500', '74.064', '73.725', '74.075', '191302'], tone: ['', 'b', '', '', '', ''] },
  { head: ['A.Ort', 'Dusuk', 'Teo.F%', 'G.Fark', 'Son-Uz', 'AcikDg'], row: ['73.833', '73.225', '-0.120', '+0.34', '+0.339', '-3803'], tone: ['', 'r', 'r', 'b', 'b', 'r'] },
]
const brokers = [
  ['CREDIT', '2768', '73,525', 'BGC PAR', '3000', '73,51'],
  ['EFG IST', '2527', '74,336', 'OYAK', '1405', '73,64'],
  ['DENIZ', '1293', '73,444', 'TACIRLE', '1163', '73,95'],
  ['DiGER', '7262', '-', 'DiGER', '8282', '-'],
]
const depth = [
  ['1', '106', '73,975', '74,000', '332', '13', '16:39:4'],
  ['7', '128', '73,950', '74,025', '169', '11', '16:39:3'],
  ['12', '86', '73,925', '74,050', '141', '14', '16:39:4'],
  ['5', '112', '73,900', '74,075', '165', '13', '16:39:3'],
  ['6', '25', '73,875', '74,100', '473', '32', '16:39:4'],
]
const trades = [
  ['16:39:39', '73,975', '5', 'MEKSA', 'HALK'],
  ['16:39:38', '73,975', '16', 'YAPI KREDI', 'GEDIK'],
  ['16:39:38', '73,975', '4', 'YAPI KREDI', 'OYAK'],
  ['16:39:38', '73,975', '4', 'YAPI KREDI', 'TACIRLER'],
  ['16:39:38', '73,975', '4', 'YAPI KREDI', 'GEDIK'],
  ['16:39:37', '73,975', '2', 'YAPI KREDI', 'GEDIK'],
  ['16:39:36', '73,975', '20', 'YAPI KREDI', 'DENIZ'],
]
const segments = [
  'w-[3px] bg-[#00ff00]', 'w-[18px] bg-[#00f000]', 'w-[14px] bg-[#00e000]', 'w-[21px] bg-[#00d000]', 'w-[18px] bg-[#00b800]',
  'w-[58px] bg-[#c80000]', 'w-[29px] bg-[#d80000]', 'w-6 bg-[#e80000]', 'w-7 bg-[#f80000]', 'flex-1 bg-[#ff0000]',
]

const tones: Record<string, string> = { '': 'text-black', b: 'text-[#0000b8]', r: 'text-[#b80000]' }

function QuoteWindow() {
  return (
    <article className="absolute top-[541px] left-[540px] w-[336px] bg-[#f3f6fb] px-2 pt-[7px] pb-4 font-['Liberation_Sans',Arial,sans-serif] text-[12px] font-bold shadow-[inset_1px_1px_0_#ffffff,inset_-1px_0_0_#707070,inset_-2px_0_0_#a8a8a8]">
      <header className="flex h-3 bg-[#000080]">
        <SmallButton label="Close quote"><Cross /></SmallButton>
        <h2 className="min-w-0 flex-1 overflow-hidden pl-0.5 font-['DejaVu_Sans_Mono','Liberation_Mono',monospace] text-[11px] leading-[10px] whitespace-pre text-white">
          {'VIX0300810     XU30 Agu 10/111F_IX0300810'}
        </h2>
        <SmallButton label="Detach"><path d="M2 1h5v5h-2v-2h-1v1h-1v1h-1v1h-1v-2h1v-1h1v-1h1v-1h-2z" fill="#000" /></SmallButton>
        <SmallButton label="Quote menu"><Down /></SmallButton>
        <SmallButton label="Close panel"><Cross /></SmallButton>
      </header>

      <div className="mt-0.5 border border-[#707070] bg-white">
        <table className="w-[314px] table-fixed border-collapse text-right leading-[11px]">
          <colgroup>
            <col className="w-12" /><col className="w-[49px]" /><col className="w-[52px]" />
            <col className="w-[51px]" /><col className="w-14" /><col className="w-[58px]" />
          </colgroup>
          <tbody>
            {summary.map((block, k) => [
              <tr key={`h${k}`} className="bg-[#dedede] text-black">
                {block.head.map((h) => (
                  <th key={h} className="h-[11px] p-0 pr-0.5 last:pr-1.5">{h}</th>
                ))}
              </tr>,
              <tr key={`r${k}`}>
                {block.row.map((v, i) => (
                  <td key={v} className={`h-[11px] p-0 pr-0.5 last:pr-1.5 ${tones[block.tone[i]]}`}>{v}</td>
                ))}
              </tr>,
            ])}
          </tbody>
        </table>
      </div>

      <div className="border-x border-t border-[#707070] bg-white">
        <table className="w-[316px] table-fixed border-collapse text-right leading-[15px] whitespace-nowrap">
          <colgroup>
            <col className="w-[60px]" /><col className="w-[43px]" /><col className="w-[57px]" />
            <col className="w-[65px]" /><col className="w-[43px]" /><col className="w-12" />
          </colgroup>
          <thead>
            <tr className="bg-[#efefef] text-black">
              <th className="p-0 pl-2 text-left">ALICILA</th><th className="p-0 pr-0.5">N.LOT</th><th className="p-0 pr-0.5">Maliyet</th>
              <th className="p-0 pl-1.5 text-left">SATICILA</th><th className="p-0 pr-0.5">N.LOT</th><th className="p-0 pr-1">Maliye</th>
            </tr>
          </thead>
          <tbody>
            {brokers.map((b, k) => {
              const other = k === 3
              const buy = other ? 'text-black' : 'text-[#0000b8]'
              const sell = other ? 'text-black' : 'text-[#b80000]'
              return (
                <tr key={k}>
                  <td className={`p-0 pl-1 text-left ${buy}`}>{b[0]}</td>
                  <td className={`p-0 pr-0.5 ${buy}`}>{b[1]}</td>
                  <td className={`p-0 pr-0.5 ${buy}`}>{b[2]}</td>
                  <td className={`p-0 pl-1.5 text-left ${sell}`}>{b[3]}</td>
                  <td className={`p-0 pr-0.5 ${sell}`}>{b[4]}</td>
                  <td className={`p-0 pr-1 ${sell}`}>{b[5]}</td>
                </tr>
              )
            })}
          </tbody>
        </table>
        <div className="flex h-2 gap-0.5 border-y-2 border-t-black border-b-black bg-black">
          {segments.map((s) => <span key={s} className={s} />)}
        </div>
        <table className="w-[311px] table-fixed border-collapse text-right leading-[14px]">
          <colgroup>
            <col className="w-[30px]" /><col className="w-[46px]" /><col className="w-[57px]" /><col className="w-14" />
            <col className="w-[41px]" /><col className="w-[26px]" /><col className="w-[55px]" />
          </colgroup>
          <thead>
            <tr className="bg-[#f4f4f4] text-black">
              {['Emir', 'Lot', 'Alis', 'Satis', 'Lot', 'Emir', 'Saat'].map((h, i) => (
                <th key={i} className="h-[14px] border-r border-b border-black p-0 text-center">
                  <span className="block h-[13px] overflow-hidden pl-1 leading-[13px]">{h}</span>
                </th>
              ))}
            </tr>
          </thead>
          <tbody>
            {depth.map((row, k) => (
              <tr key={k} className="bg-[#efefef] text-black">
                {row.map((v, i) => (
                  <td key={i} className={`p-0 pr-1 ${k === 0 && i > 2 ? 'bg-black text-[#00f000]' : ''}`}>{v}</td>
                ))}
              </tr>
            ))}
            <tr className="bg-white text-[#0000ff]">
              {['216', '2065', '73,719', '74,248', '6466', '50', ''].map((v, i) => (
                <td key={i} className="p-0 pr-1">{v}</td>
              ))}
            </tr>
          </tbody>
        </table>
      </div>

      <div className="mt-px flex border border-t-2 border-[#707070] bg-white">
        <table className="w-[305px] table-fixed border-collapse leading-[13px] whitespace-nowrap text-[#b80000]">
          <colgroup>
            <col className="w-[62px]" /><col className="w-[52px]" /><col className="w-[38px]" />
            <col className="w-16" /><col className="w-[81px]" /><col className="w-2" />
          </colgroup>
          <thead>
            <tr className="bg-[#c0c0c0] text-black">
              {['SAAT', 'FIYAT', 'LOT', 'ALAN', 'SATAN', ''].map((h, i) => (
                <th key={i} className={`h-[13px] border-r border-b border-black p-0 ${i === 1 || i === 2 ? 'pr-1 text-right' : i === 0 ? 'pl-1 text-left' : 'pl-0.5 text-left'}`}>{h}</th>
              ))}
            </tr>
          </thead>
          <tbody>
            {trades.map((t, k) => (
              <tr key={k}>
                {[...t, ''].map((v, i) => (
                  <td key={i} className={`h-[13px] overflow-hidden border-r border-[#b0b0b0] p-0 ${i === 1 || i === 2 ? 'pr-1 text-right' : i === 0 ? 'pl-1 text-left' : 'pl-0.5 text-left'}`}>{v}</td>
                ))}
              </tr>
            ))}
          </tbody>
        </table>
        <div className="flex flex-1 flex-col bg-[#f6f6f6]">
          <button aria-label="Scroll up" className="flex h-[15px] items-center justify-center border border-white border-r-[#606060] border-b-[#606060] bg-[#ececec]">
            <svg width="5" height="3"><path d="M0 3h5L2.500 0z" /></svg>
          </button>
          <div className="h-2 border border-white border-r-[#606060] border-b-[#606060] bg-[#ececec]" />
          <div className="flex-1" />
          <button aria-label="Scroll down" className="flex h-[15px] items-center justify-center border border-white border-r-[#606060] border-b-[#606060] bg-[#ececec]">
            <svg width="5" height="3"><path d="M0 0h5L2.500 3z" /></svg>
          </button>
        </div>
      </div>

      <div className="mt-0.5 flex border border-[#707070] bg-white leading-[13px] text-[#b80000]">
        <span className="w-[56px] border-r border-[#b0b0b0] pl-1">HALK</span>
        <span className="w-[55px] border-r border-[#b0b0b0] pr-0.5 text-right">73,975</span>
        <span className="w-[73px] border-r border-[#b0b0b0] pr-1 text-right">F.Lot</span>
      </div>
    </article>
  )
}

function Clock() {
  const [time] = useState('16:39:42')
  return (
    <div className="absolute top-[22px] left-[552px] z-10 rounded-md border border-[#303030] border-r-[#40c8f0] border-b-[#40c8f0] bg-gradient-to-b from-[#8c8c8c] via-[#a8a8a8] to-[#7c7c7c] p-1 shadow-[1px_1px_8px_3px_rgba(0,0,0,0.6)]">
      <time className="block w-[98px] border border-[#d0d0d0] bg-[#004080] text-center font-['Liberation_Sans',Arial,sans-serif] text-[23px] leading-8 font-bold text-white">
        {time}
      </time>
    </div>
  )
}

export default function App() {
  return (
    <div className="relative flex h-screen flex-col overflow-hidden bg-[#a9a9a9]">
      <div className="flex h-3 shrink-0 justify-end bg-gradient-to-r from-black from-75% to-[#585858] to-90%">
        <div className="h-1 w-[82px] rounded-bl border-b border-l border-[#909090]">
          <div className="ml-[25px] h-1 w-[25px] border-x border-[#909090]" />
        </div>
      </div>
      <div className="h-[30px] shrink-0 border-t-2 border-b border-t-[#8c8c8c] border-b-[#c8c8c0] bg-[#e2e2d6]" />
      <div className="h-0.5 shrink-0 bg-[#707070]" />
      <main className="relative flex flex-1 items-start">
        <div className="flex items-start gap-px pt-2">
          <LeftChart />
          <MiddleChart />
        </div>
        <div className="ml-0.5 flex min-w-0 flex-1 flex-col self-stretch pt-0.5">
          <RightChart />
          <IndexTable />
        </div>
        <QuoteWindow />
      </main>
      <Clock />
    </div>
  )
}
